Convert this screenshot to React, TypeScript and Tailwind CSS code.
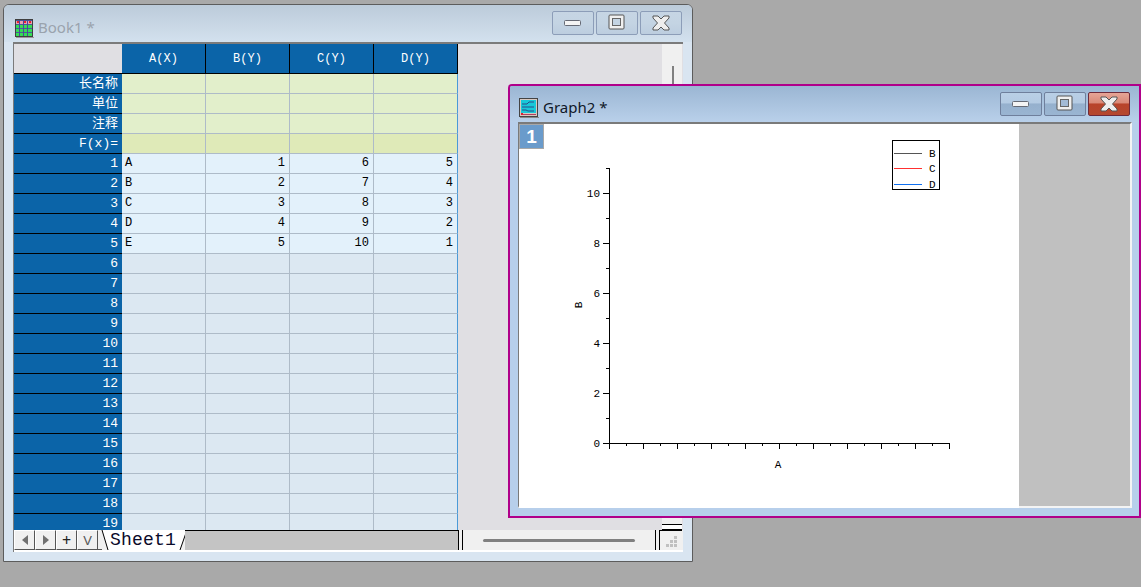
const mono = { fontFamily: '"Liberation Mono","Noto Sans CJK SC",monospace' };

function WinButton({ kind, close, graph }: { kind: 'min' | 'max' | 'x'; close?: boolean; graph?: boolean }) {
  const bg = close
    ? 'bg-[linear-gradient(#e6a596_0%,#d98a78_45%,#b8432a_50%,#b5482f_100%)] border-[#6e2a3a]'
    : graph
    ? 'bg-[linear-gradient(#b9cfe6_0%,#b4cbe3_45%,#95b0cd_50%,#9ab5d2_100%)] border-[#6f7f9c]'
    : 'bg-[linear-gradient(#c6d5e4_0%,#c4d4e3_50%,#bccddf_100%)] border-[#8c9db8]';
  return (
    <div className={`w-[42px] h-[24px] border rounded-[2px] flex items-center justify-center ${bg}`}>
      <svg width="20" height="18" viewBox="0 0 20 18">
        {kind === 'min' && <rect x="1.5" y="6.5" width="16" height="5" rx="1" fill="#f4f4f4" stroke="#666a75" />}
        {kind === 'max' && (
          <g>
            <rect x="2" y="1" width="15" height="14" rx="1" fill="#f0f0f0" stroke="#555" />
            <rect x="5.5" y="4.5" width="8" height="7" fill={graph ? '#a3bbd6' : '#c4d4e3'} stroke="#666" />
          </g>
        )}
        {kind === 'x' && (
          <path
            d="M2 2h5l3 3 3-3h5v2l-4.500 5 4.500 5v2h-5l-3-3-3 3H2v-2l4.500-5L2 4z"
            fill="#eeeeee"
            stroke="#555"
            strokeWidth="1"
          />
        )}
      </svg>
    </div>
  );
}

function BookIcon() {
  return (
    <svg width="20" height="20" viewBox="0 0 20 20" className="shrink-0">
      <rect x="1" y="1" width="18" height="18" fill="#3f3f3f" />
      <rect x="2" y="2" width="16" height="4" fill="#e8a0b0" />
      <rect x="2" y="6" width="16" height="12" fill="#33dd55" />
      {[2, 6, 10, 14].map((y) => <rect key={y} x="2" y={y} width="16" height="1" fill="#4a5a9a" />)}
      {[5, 9, 13].map((x) => <rect key={x} x={x} y="2" width="1" height="16" fill="#4a4a9a" />)}
      <rect x="3" y="3" width="2" height="2" fill="#e82030" />
      <rect x="10" y="3" width="2" height="2" fill="#e82030" />
      <rect x="15" y="3" width="2" height="2" fill="#e82030" />
      <rect x="2" y="19" width="18" height="1" fill="#999" />
    </svg>
  );
}

function GraphIcon() {
  return (
    <svg width="20" height="20" viewBox="0 0 20 20" className="shrink-0">
      <rect x="0.500" y="0.500" width="18" height="18" fill="#d8c8c0" stroke="#444" />
      <rect x="2" y="2" width="15" height="13" fill="#18c8d8" />
      <path d="M3 6h5l2-2h5M3 9h12M3 12h4l2 1h6" stroke="#2a4a8a" strokeWidth="1" fill="none" />
      <rect x="2" y="16" width="15" height="1" fill="#b04060" />
      <rect x="2" y="15" width="2" height="2" fill="#e02030" />
      <rect x="1" y="19" width="19" height="1" fill="#888" />
    </svg>
  );
}

const ROW_H = 'h-[20px]';

function Row({
  label,
  cells,
  bg,
  first,
}: {
  label: string;
  cells: string[];
  bg: string;
  first?: boolean;
}) {
  return (
    <div className={`flex ${ROW_H} shrink-0 text-[12px] leading-[19px]`} style={mono}>
      <div className="w-[108px] shrink-0 bg-[#0b64a8] border-b border-black text-white text-right pr-[4px] whitespace-nowrap text-[13px]">
        {label}
      </div>
      {cells.map((c, i) => (
        <div
          key={i}
          className={`w-[84px] shrink-0 border-r border-b border-[#aebbc8] text-black ${bg} ${
            i === 0 ? 'text-left pl-[3px]' : 'text-right pr-[4px]'
          } ${i === 3 ? 'border-r-[#4a9ad8]' : ''} ${first ? 'border-t-0' : ''}`}
        >
          {c}
        </div>
      ))}
    </div>
  );
}

function NavBtn({ children }: { children: React.ReactNode }) {
  return (
    <div className="w-[21px] h-[20px] bg-[#f0f0f0] border-r border-b border-[#555] border-l border-t border-l-white border-t-white flex items-center justify-center text-[#222] text-[16px] leading-none">
      {children}
    </div>
  );
}

function Chart() {
  const ox = 90;
  const oy = 319;
  const yMajor = [0, 2, 4, 6, 8, 10];
  const yMinor = [1, 3, 5, 7, 9, 11];
  const xs = Array.from({ length: 21 }, (_, i) => i);
  const font = '"Liberation Mono",monospace';
  return (
    <svg width="500" height="384" viewBox="0 0 500 384" className="block">
      <path d={`M${ox + 0.5} ${oy - 275}V${oy + 6}M${ox} ${oy + 0.5}H${ox + 341}`} stroke="#000" fill="none" />
      {yMajor.map((v) => (
        <g key={v}>
          <path d={`M${ox - 6} ${oy - v * 25 + 0.5}H${ox}`} stroke="#000" />
          <text x={ox - 9} y={oy - v * 25 + 4} textAnchor="end" fontSize="11" fontFamily={font} fill="#000">
            {v}
          </text>
        </g>
      ))}
      {yMinor.map((v) => (
        <path key={v} d={`M${ox - 3} ${oy - v * 25 + 0.5}H${ox}`} stroke="#000" />
      ))}
      {xs.map((i) => (
        <path
          key={i}
          d={`M${ox + i * 17 + 0.5} ${oy}V${oy + (i % 2 === 0 ? 6 : 3)}`}
          stroke="#000"
        />
      ))}
      <text x="259" y="344" textAnchor="middle" fontSize="11" fontFamily={font} fill="#000">A</text>
      <text
        x="0"
        y="0"
        transform="translate(63 181) rotate(-90)"
        textAnchor="middle"
        fontSize="11"
        fontFamily={font}
        fill="#000"
      >
        B
      </text>
      <rect x="373.500" y="16.500" width="47" height="49" fill="#fff" stroke="#000" />
      {[
        ['B', '#555555', 29],
        ['C', '#ff3030', 44],
        ['D', '#1070f0', 60],
      ].map(([l, c, y]) => (
        <g key={l as string}>
          <path d={`M375 ${(y as number) + 0.5}H403`} stroke={c as string} />
          <text x="410" y={(y as number) + 4} fontSize="11" fontFamily={font} fill="#000">
            {l as string}
          </text>
        </g>
      ))}
    </svg>
  );
}

export default function App() {
  const data = [
    ['A', '1', '6', '5'],
    ['B', '2', '7', '4'],
    ['C', '3', '8', '3'],
    ['D', '4', '9', '2'],
    ['E', '5', '10', '1'],
  ];
  const empties = Array.from({ length: 14 }, (_, i) => i + 6);
  return (
    <div className="relative w-[1141px] h-[587px] overflow-hidden bg-[#a9a9a9]">
      {/* Book window */}
      <div className="absolute left-[3px] top-[4px] w-[690px] h-[558px] border border-[#5c5c5c] rounded-tl-[6px] rounded-tr-[6px] bg-[#d9e5f1] flex flex-col overflow-hidden">
        <div className="h-[37px] shrink-0 flex items-center pl-[10px] pr-[10px] bg-[linear-gradient(#bccbda,#d3e1ee)]">
          <div className="mt-[8px]"><BookIcon /></div>
          <span className="ml-[4px] mt-[8px] text-[15px] text-[#9aa3ad]" style={{ fontFamily: '"Noto Sans","Open Sans",sans-serif' }}>
            Book1 *
          </span>
          <div className="ml-auto flex gap-[2px] -mt-[1px]">
            <WinButton kind="min" />
            <WinButton kind="max" />
            <WinButton kind="x" />
          </div>
        </div>
        <div className="mx-[9px] h-[510px] flex flex-col border-t-2 border-l border-[#7b7b7b] border-b-0 bg-[#e0dfe3]">
          <div className="flex flex-1 min-h-0">
            <div className="w-[444px] shrink-0 flex flex-col overflow-hidden">
              <div className="flex h-[30px] shrink-0 text-[12px] leading-[30px]" style={mono}>
                <div className="w-[108px] bg-[#e0dfe3] border-b border-black" />
                {['A(X)', 'B(Y)', 'C(Y)', 'D(Y)'].map((h) => (
                  <div key={h} className="w-[84px] bg-[#0b64a8] text-white text-center border-r border-b border-black">
                    {h}
                  </div>
                ))}
              </div>
              <Row label="长名称" cells={['', '', '', '']} bg="bg-[#e2efcb]" />
              <Row label="单位" cells={['', '', '', '']} bg="bg-[#e2efcb]" />
              <Row label="注释" cells={['', '', '', '']} bg="bg-[#e2efcb]" />
              <Row label="F(x)=" cells={['', '', '', '']} bg="bg-[#dfeab8]" />
              {data.map((d, i) => (
                <Row key={i} label={String(i + 1)} cells={d} bg="bg-[#e3f1fb]" />
              ))}
              {empties.map((n) => (
                <Row key={n} label={String(n)} cells={['', '', '', '']} bg="bg-[#dce8f2]" />
              ))}
            </div>
            <div className="flex-1" />
            <div className="w-[20px] mr-[1px] shrink-0 bg-[#f0f0f0] flex flex-col items-center relative">
              <div className="w-[2px] h-[23px] mt-[22px] ml-[1px] bg-[#808080]" />
              <div className="mt-auto w-full h-[6px] border-t border-b border-black bg-white" />
            </div>
          </div>
          <div className="h-[22px] shrink-0 flex bg-[#f0f0f0] border-b-2 border-white relative">
            <div className="w-[88px] shrink-0 flex bg-[#f0f0f0] border-b border-[#555]">
              <NavBtn>
                <svg width="10" height="12" viewBox="0 0 10 12"><path d="M8 1v10L2 6z" fill="#707070" /></svg>
              </NavBtn>
              <NavBtn>
                <svg width="10" height="12" viewBox="0 0 10 12"><path d="M2 1v10l6-5z" fill="#707070" /></svg>
              </NavBtn>
              <NavBtn>+</NavBtn>
              <NavBtn>
                <span className="text-[13px] text-[#555]" style={{ fontFamily: '"Liberation Sans",sans-serif' }}>V</span>
              </NavBtn>
            </div>
            <div className="relative w-[84px] h-[21px] shrink-0 -ml-[1px]">
              <svg width="84" height="21" viewBox="0 0 84 21" className="absolute inset-0">
                <path d="M1 0H86L79 20H7z" fill="#fff" />
                <path d="M1 0L7 20M86 0L79 20" stroke="#000" fill="none" />
              </svg>
              <span className="absolute left-[9px] top-[-1px] text-[18px] leading-[22px] text-[#0a0a2a] whitespace-nowrap" style={{ fontFamily: '"Liberation Mono",monospace', letterSpacing: '0.2px' }}>
                Sheet1
              </span>
            </div>
            <div className="w-[274px] shrink-0 bg-[#c4c4c4] border-t border-black border-r" />
            <div className="w-[1px] ml-[3px] bg-black shrink-0" />
            <div className="flex-1 flex items-center pl-[20px]">
              <div className="w-[152px] h-[3px] rounded-full bg-[#808080]" />
            </div>
            <div className="w-[1px] bg-black shrink-0" />
            <div className="w-[1px] ml-[3px] bg-black shrink-0" />
            <div className="w-[22px] mr-[1px] shrink-0 border-t border-black flex items-end justify-end pb-[2px] pr-[4px]">
              <svg width="12" height="12" viewBox="0 0 12 12" fill="#c0c0c0">
                <rect x="8" y="0" width="3" height="3" />
                <rect x="4" y="4" width="3" height="3" />
                <rect x="8" y="4" width="3" height="3" />
                <rect x="0" y="8" width="3" height="3" />
                <rect x="4" y="8" width="3" height="3" />
                <rect x="8" y="8" width="3" height="3" />
              </svg>
            </div>
          </div>
        </div>
      </div>

      {/* Graph window */}
      <div className="absolute left-[508px] top-[84px] w-[633px] h-[434px] border-2 border-[#b0008a] rounded-tl-[4px] bg-[#b7cfeb] flex flex-col overflow-hidden">
        <div className="h-[36px] shrink-0 flex items-center pl-[9px] pr-[9px] bg-[linear-gradient(#9bb6d3,#b9d0ea)]">
          <div className="mt-[7px]"><GraphIcon /></div>
          <span className="ml-[4px] mt-[7px] text-[15px] text-[#101828]" style={{ fontFamily: '"Noto Sans","Open Sans",sans-serif' }}>
            Graph2 *
          </span>
          <div className="ml-auto flex gap-[2px] -mt-[1px]">
            <WinButton kind="min" graph />
            <WinButton kind="max" graph />
            <WinButton kind="x" close />
          </div>
        </div>
        <div className="mx-[8px] h-[386px] shrink-0 border-t-2 border-l border-[#7a7a7a] border-b-2 border-b-[#f4f4f4] border-r-2 border-r-[#f4f4f4] flex bg-[#c0c0c0] mr-[7px]">
          <div className="relative w-[500px] h-[384px] shrink-0 bg-white">
            <div className="absolute left-0 top-0 w-[25px] h-[25px] bg-[#6a9bcb] border border-[#a8a8a8] text-white font-bold text-[19px] leading-[23px] text-center" style={{ fontFamily: '"Liberation Sans",sans-serif' }}>
              1
            </div>
            <Chart />
          </div>
        </div>
      </div>
    </div>
  );
}
